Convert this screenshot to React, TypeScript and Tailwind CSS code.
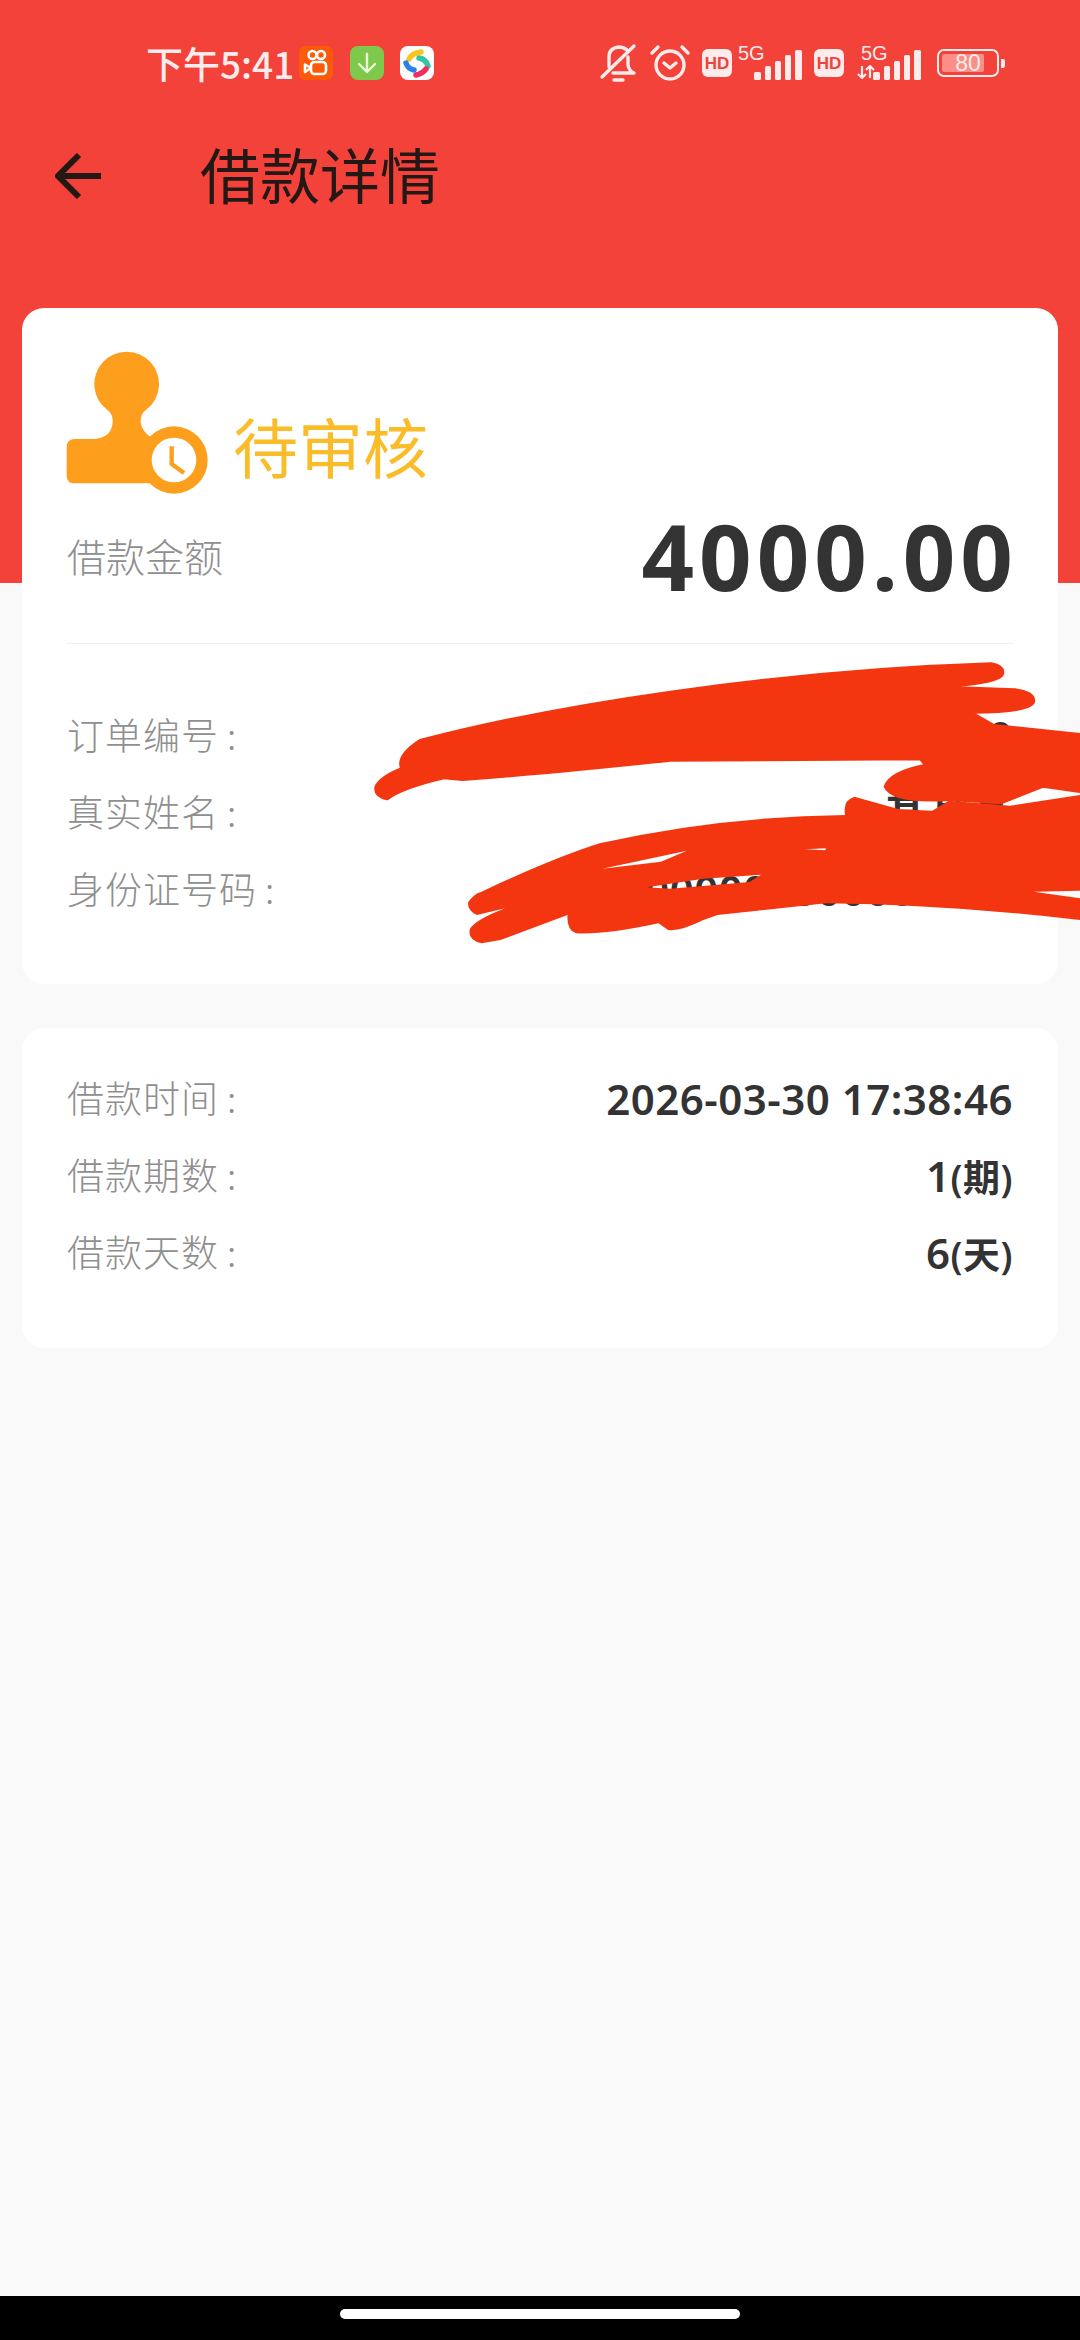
import type { ReactNode } from "react";

const cjk = "font-['Noto_Sans_CJK_SC','Noto_Sans',sans-serif]";

function Kuaishou() {
  return (
    <div className="ml-[9px] w-[34px] h-[34px] rounded-[6px] bg-[#fb5a08] flex items-center justify-center">
      <svg width="26" height="28" viewBox="0 0 26 28" fill="none" stroke="#fff" strokeWidth="2.6">
        <circle cx="9.5" cy="6" r="4" />
        <circle cx="18" cy="6" r="4" />
        <rect x="8" y="13" width="15" height="12" rx="3.5" />
        <path d="M8 19 L2 15.5 V23 L8 19" strokeLinejoin="round" />
      </svg>
    </div>
  );
}

function GreenDownload() {
  return (
    <div className="ml-[17px] w-[34px] h-[34px] rounded-[8px] bg-[#7ec94c] flex items-center justify-center">
      <svg width="22" height="24" viewBox="0 0 22 24" fill="none" stroke="#e8f7d8" strokeWidth="2.4" strokeLinecap="round" strokeLinejoin="round">
        <path d="M11 3 V21 M3 13 L11 21 L19 13" />
      </svg>
    </div>
  );
}

function ColorApp() {
  return (
    <div className="ml-[16px] w-[34px] h-[34px] rounded-[8px] bg-white flex items-center justify-center">
      <svg width="30" height="30" viewBox="0 0 30 30" fill="none" strokeWidth="5.5" strokeLinecap="round">
        <path d="M7 11 Q10 5 19 4" stroke="#f8c51c" />
        <path d="M17 10 Q24 11 26 18" stroke="#2fc5a6" />
        <path d="M24 21 Q20 26 14 27" stroke="#ef2f5f" />
        <path d="M12 22 Q6 21 4 15" stroke="#2a7fe8" />
      </svg>
    </div>
  );
}

function BellOff() {
  return (
    <svg width="40" height="40" viewBox="0 0 40 40" fill="none" stroke="#fdeceb" strokeWidth="3.4" strokeLinecap="round" strokeLinejoin="round">
      <path d="M10 24 V14 Q10 5 20 4 Q25 4 28 7" />
      <path d="M29 14 V22 Q30 28 35 30 H14" />
      <path d="M3 34 L35 3" />
      <path d="M15 37 H24" />
    </svg>
  );
}

function Alarm() {
  return (
    <svg className="ml-[10px]" width="42" height="38" viewBox="0 0 42 38" fill="none" stroke="#fdeceb" strokeWidth="3.4" strokeLinecap="round" strokeLinejoin="round">
      <circle cx="21" cy="21" r="14" />
      <path d="M15 19 L21 24 L27 19" />
      <path d="M3 9 L9 3 M39 9 L33 3" />
    </svg>
  );
}

function HD({ className }: { className: string }) {
  return (
    <div className={`w-[30px] h-[28px] rounded-[6px] bg-[#fdeceb] flex items-center justify-center text-[#f2423a] text-[17px] font-bold leading-none font-['Liberation_Sans',sans-serif] ${className}`}>
      HD
    </div>
  );
}

function Bars() {
  return (
    <svg width="48" height="30" viewBox="0 0 48 30" fill="#fdeceb" className="absolute right-0 bottom-0">
      <rect x="0" y="22" width="7" height="8" rx="1.5" />
      <rect x="11" y="16" width="6" height="14" rx="1.5" />
      <rect x="21" y="11" width="6" height="19" rx="1.5" />
      <rect x="31" y="5" width="6" height="25" rx="1.5" />
      <rect x="41" y="0" width="7" height="30" rx="1.5" />
    </svg>
  );
}

function Signal({ arrows, className }: { arrows?: boolean; className: string }) {
  return (
    <div className={`relative w-[64px] h-[34px] ${className}`}>
      <span className={`absolute top-[-3px] text-[#fdeceb] text-[20px] leading-none font-['Liberation_Sans',sans-serif] ${arrows ? "left-[4px]" : "left-0"}`}>5G</span>
      {arrows && (
        <svg width="18" height="14" viewBox="0 0 18 14" fill="none" stroke="#fdeceb" strokeWidth="2.2" className="absolute left-0 bottom-[1px]">
          <path d="M5 1 V13 M1 9 L5 13 L9 9" />
          <path d="M13 13 V1 M9 5 L13 1 L17 5" />
        </svg>
      )}
      <Bars />
    </div>
  );
}

function Battery() {
  return (
    <div className="ml-[16px] flex items-center">
      <div className="w-[62px] h-[28px] rounded-[7px] border-[2.5px] border-[#fdeceb] p-[3px] relative">
        <div className="h-full w-[80%] rounded-[2px] bg-[#fb8e87]" />
        <span className="absolute inset-0 flex items-center justify-center text-[23px] leading-none text-[#fdeceb] font-['Liberation_Sans',sans-serif]">80</span>
      </div>
      <div className="ml-[2px] w-[4px] h-[9px] rounded-r-[2px] bg-[#fdeceb]" />
    </div>
  );
}

function Row({ label, value }: { label: string; value: ReactNode }) {
  return (
    <div className="h-[77px] flex items-center justify-between">
      <span className={`pb-[4px] text-[37px] leading-none text-[#8f8f8f] font-light tracking-[1px] whitespace-nowrap ${cjk}`}>
        {label}
        <span className="ml-[8px]">:</span>
      </span>
      <span className="pb-[1px] text-[42px] leading-none text-[#333333] font-semibold tracking-[0.5px] whitespace-nowrap font-['Noto_Sans','Noto_Sans_CJK_SC',sans-serif]">{value}</span>
    </div>
  );
}

function Unit({ children }: { children: ReactNode }) {
  return <span className="text-[37px]">{children}</span>;
}

function Scribble() {
  return (
    <svg
      className="absolute left-[340px] top-[640px] w-[740px] h-[320px]"
      viewBox="0 0 1568 960"
      preserveAspectRatio="none"
      fill="#f43610"
    >
      <path
        stroke="#f43610"
        strokeWidth="6"
        strokeLinejoin="round"
        d="M100 478 Q72 470 76 440 Q85 410 130 385 Q120 345 170 300 Q400 215 700 155 Q1050 85 1380 70 Q1408 78 1404 102 Q1400 130 1280 140 L1430 148 Q1472 155 1470 185 Q1465 218 1340 218 L1385 255 L1568 282 L1568 456 L1490 440 L1400 490 L1290 480 Q1170 490 1155 440 Q1165 395 1240 375 L1230 358 L700 362 Q450 400 260 420 L220 415 Q130 445 100 478 Z"
      />
      <path
        fillRule="evenodd"
        d="M300 910 Q270 900 275 868 Q285 840 350 805 L290 825 Q268 810 272 785 Q285 760 300 755 Q450 655 550 610 Q800 530 1070 525 Q1065 480 1090 470 L1185 508 L1255 512 L1290 482 L1420 497 L1568 465 L1568 840 Q1300 795 1030 790 L800 825 L770 840 Q720 875 695 870 L675 850 Q560 885 500 880 Q480 870 482 825 L340 900 Z M556 686 L735 632 L680 665 Z M650 742 L770 716 L892 704 L868 726 L700 746 Z M985 628 L1030 625 L1028 631 Z M1470 755 L1568 775 L1568 752 Z"
      />
    </svg>
  );
}

export default function App() {
  return (
    <div className={`relative w-[1080px] h-[2340px] overflow-hidden bg-[#f9f9f9] flex flex-col ${cjk}`}>
      <header className="h-[583px] shrink-0 bg-[#f2423a]">
        <div className="h-[126px] flex items-center pl-[146px]">
          <span className="w-[144px] text-[37px] font-medium leading-none text-[#fdeceb] whitespace-nowrap">下午5:41</span>
          <Kuaishou />
          <GreenDownload />
          <ColorApp />
          <div className="ml-[165px] flex items-center">
            <BellOff />
            <Alarm />
            <HD className="ml-[11px]" />
            <Signal className="ml-[6px]" />
            <HD className="ml-[12px]" />
            <Signal arrows className="ml-[13px]" />
            <Battery />
          </div>
        </div>
        <div className="h-[100px] flex items-center pl-[55px]">
          <svg width="46" height="46" viewBox="0 0 46 46" fill="none" stroke="#231815" strokeWidth="6" strokeLinecap="butt" strokeLinejoin="miter">
            <path d="M46 23 H4 M24 2 L3 23 L24 44" />
          </svg>
          <h1 className="ml-[99px] pb-[6px] text-[60px] leading-none font-normal text-[#231815]">借款详情</h1>
        </div>
      </header>

      <main className="-mt-[275px] mx-[22px] flex flex-col gap-[44px]">
        <section className="bg-white rounded-[22px] h-[676px] px-[45px] pt-[42px]">
          <div className="flex items-end h-[146px]">
            <svg className="-ml-[1px]" width="144" height="146" viewBox="138 153 432 438">
              <path fill="#fd9e1d" d="M165 420 L225 420 Q275 415 278 370 Q280 345 262 333 A97 97 0 1 1 378 333 Q360 345 362 370 Q365 400 400 420 L400 553 L165 553 Q140 553 140 530 L140 445 Q140 420 165 420 Z" />
              <circle cx="462" cy="483" r="101" fill="#fd9e1d" />
              <circle cx="462" cy="483" r="67" fill="#fff" />
              <path d="M455 442 L455 495 L492 522" fill="none" stroke="#fd9e1d" strokeWidth="13" />
            </svg>
            <span className="ml-[23px] mb-[18px] text-[65px] leading-none font-normal text-[#fbbc2a]">待审核</span>
          </div>
          <div className="h-[126px] flex items-center justify-between">
            <span className="pb-[8px] text-[39px] leading-none font-light text-[#8f8f8f]">借款金额</span>
            <span className="pb-[6px] -mr-[5px] text-[92px] leading-none font-bold tracking-[5px] text-[#333333] font-['Noto_Sans',sans-serif]">4000.00</span>
          </div>
          <div className="mt-[21px] h-[1px] bg-[#eeeeee]" />
          <div className="mt-[54px]">
            <Row label="订单编号" value="000000000000000000" />
            <Row label="真实姓名" value="某某某" />
            <Row label="身份证号码" value="400000000000000006" />
          </div>
        </section>

        <section className="bg-white rounded-[22px] h-[320px] px-[45px] pt-[33px]">
          <Row label="借款时间" value="2026-03-30 17:38:46" />
          <Row label="借款期数" value={<>1<Unit>(期)</Unit></>} />
          <Row label="借款天数" value={<>6<Unit>(天)</Unit></>} />
        </section>
      </main>

      <Scribble />

      <div className="mt-auto h-[44px] shrink-0 bg-black flex items-center justify-center">
        <div className="w-[400px] h-[10px] rounded-full bg-white -mt-[8px]" />
      </div>
    </div>
  );
}
